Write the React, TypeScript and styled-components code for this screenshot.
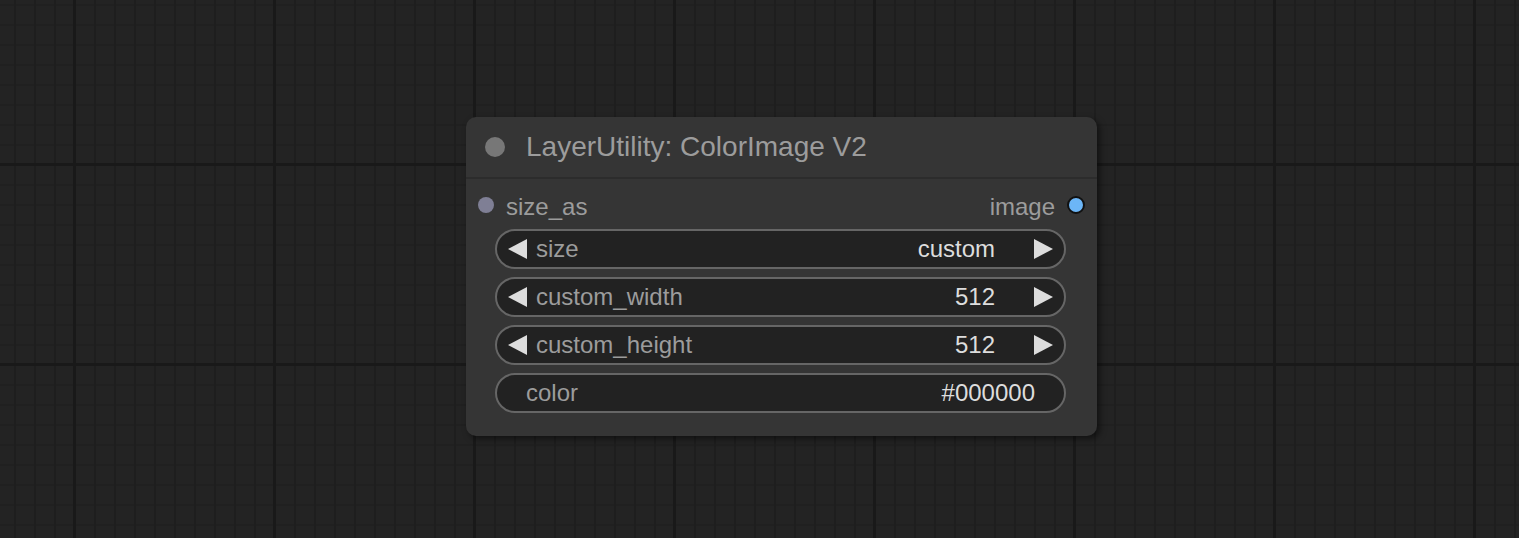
import styled, { createGlobalStyle } from "styled-components"

const GlobalStyle = createGlobalStyle`
  html, body {
    margin: 0;
    padding: 0;
    background: #232323;
  }
  body {
    font-family: "Liberation Sans", Arial, sans-serif;
  }
`

type WidgetProps = {
  label: string
  value: string
  arrows?: boolean
}

const Widget = ({ label, value, arrows = true }: WidgetProps) => {
  return (
    <WidgetBox $arrows={arrows}>
      {arrows && <Arrow $dir="left" />}
      <WidgetLabel $arrows={arrows}>{label}</WidgetLabel>
      <WidgetValue $arrows={arrows}>{value}</WidgetValue>
      {arrows && <Arrow $dir="right" />}
    </WidgetBox>
  )
}

const App = () => {
  return (
    <Canvas>
      <GlobalStyle />
      <Node>
        <TitleBar>
          <TitleDot />
          <TitleText>LayerUtility: ColorImage V2</TitleText>
        </TitleBar>
        <SlotRow>
          <Slot>
            <SlotDot $color="#7f7f95" />
            <SlotName>size_as</SlotName>
          </Slot>
          <Slot>
            <SlotName>image</SlotName>
            <SlotDot $color="#6cb6f7" $outlined />
          </Slot>
        </SlotRow>
        <Widgets>
          <Widget label="size" value="custom" />
          <Widget label="custom_width" value="512" />
          <Widget label="custom_height" value="512" />
          <Widget label="color" value="#000000" arrows={false} />
        </Widgets>
      </Node>
    </Canvas>
  )
}

export default App

const Canvas = styled.div`
  position: relative;
  width: 100%;
  height: 538px;
  overflow: hidden;
  background-color: #232323;
  background-image:
    linear-gradient(to right, #191919 3px, transparent 3px),
    linear-gradient(to bottom, #191919 3px, transparent 3px),
    linear-gradient(to right, #1e1e1e 2px, transparent 2px),
    linear-gradient(to bottom, #202020 2px, transparent 2px);
  background-size: 200px 100%, 100% 200px, 20px 100%, 100% 20px;
  background-position: 73px 0, 0 163px, 14px 0, 0 4px;
`

const Node = styled.div`
  position: absolute;
  left: 466px;
  top: 117px;
  width: 631px;
  height: 319px;
  border-radius: 10px;
  background: #353535;
  box-shadow: 3px 3px 6px rgba(0, 0, 0, 0.5);
  display: flex;
  flex-direction: column;
`

const TitleBar = styled.div`
  height: 60px;
  display: flex;
  align-items: center;
  gap: 21px;
  padding-left: 19px;
  border-bottom: 2px solid #2c2c2c;
`

const TitleDot = styled.div`
  width: 20px;
  height: 20px;
  border-radius: 50%;
  background: #777;
`

const TitleText = styled.div`
  font-size: 28px;
  color: #9c9c9c;
  white-space: nowrap;
`

const SlotRow = styled.div`
  height: 40px;
  margin-top: 6px;
  padding: 0 12px 0 12px;
  display: flex;
  align-items: center;
  justify-content: space-between;
`

const Slot = styled.div`
  display: flex;
  align-items: center;
  gap: 12px;
`

const SlotDot = styled.div<{ $color: string; $outlined?: boolean }>`
  width: ${(p) => (p.$outlined ? "18px" : "16px")};
  height: ${(p) => (p.$outlined ? "18px" : "16px")};
  border-radius: 50%;
  box-sizing: border-box;
  background: ${(p) => p.$color};
  border: ${(p) => (p.$outlined ? "2px solid #111" : "none")};
`

const SlotName = styled.span`
  font-size: 24px;
  color: #9c9c9c;
  line-height: 1;
  margin-top: 4px;
`

const Widgets = styled.div`
  display: flex;
  flex-direction: column;
  gap: 8px;
  margin: 4px 31px 0 29px;
`

const WidgetBox = styled.div<{ $arrows: boolean }>`
  height: 40px;
  box-sizing: border-box;
  border: 2px solid #666;
  border-radius: 20px;
  background: #222;
  display: flex;
  align-items: center;
  padding: ${(p) => (p.$arrows ? "0 11px" : "0 29px 0 29px")};
`

const Arrow = styled.div<{ $dir: "left" | "right" }>`
  width: 0;
  height: 0;
  border-top: 10px solid transparent;
  border-bottom: 10px solid transparent;
  ${(p) =>
    p.$dir === "left"
      ? "border-right: 19px solid #ddd;"
      : "border-left: 19px solid #ddd;"}
`

const WidgetLabel = styled.span<{ $arrows: boolean }>`
  font-size: 24px;
  color: #9c9c9c;
  margin-left: ${(p) => (p.$arrows ? "9px" : "0")};
  flex: 1;
  white-space: nowrap;
`

const WidgetValue = styled.span<{ $arrows: boolean }>`
  font-size: 24px;
  color: #ddd;
  margin-right: ${(p) => (p.$arrows ? "39px" : "0")};
  white-space: nowrap;
`
